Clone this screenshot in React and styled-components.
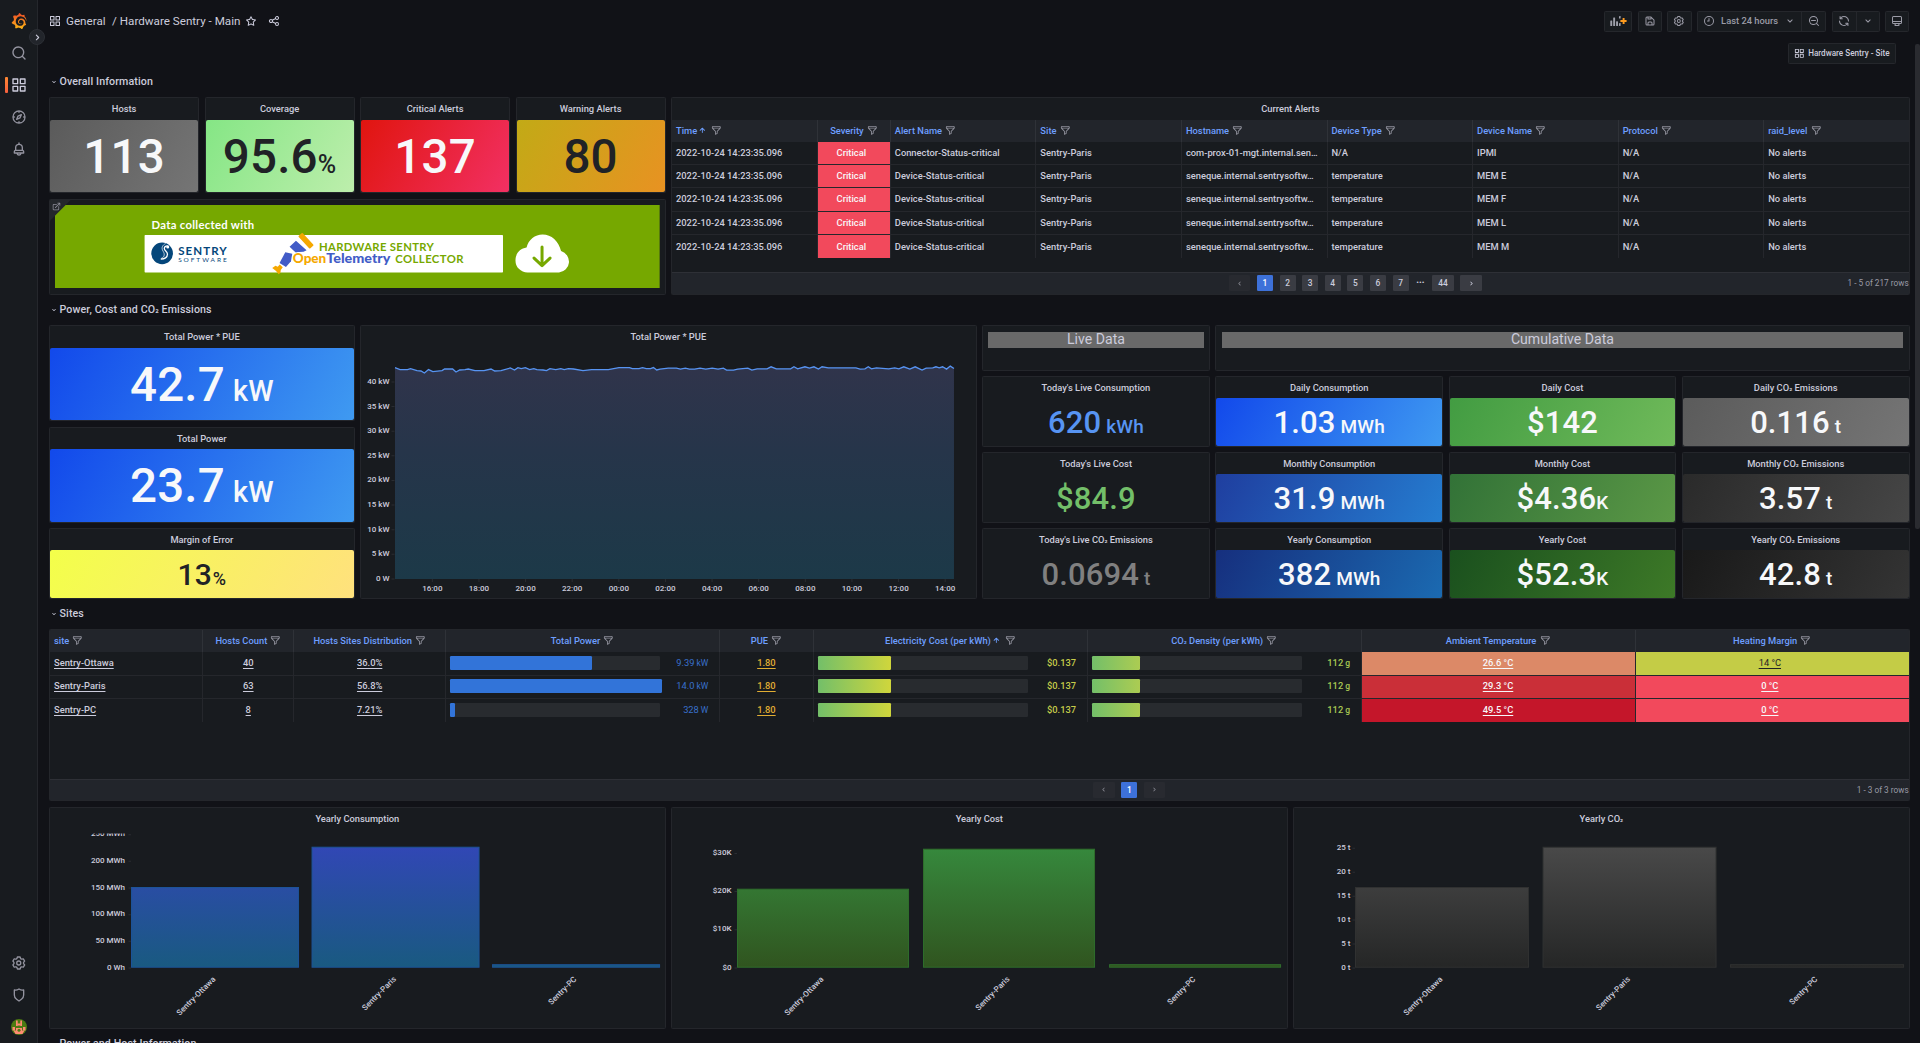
import React from "react";
import styled, { createGlobalStyle, css } from "styled-components";
import { SiGrafana } from "react-icons/si";

const GlobalStyle = createGlobalStyle`
  html, body { margin: 0; padding: 0; background: #111217; overflow: hidden; }
  * { box-sizing: border-box; }
  body {
    font-family: Roboto, "Liberation Sans", sans-serif;
    font-size: 9.333px;
    line-height: 1.5;
    color: #ccccdc;
  }
  svg { display: block; flex: none; }
`;

/* ---------- icons ---------- */

const paths = {
  apps: "M10,13H3a1,1,0,0,0-1,1v7a1,1,0,0,0,1,1h7a1,1,0,0,0,1-1V14A1,1,0,0,0,10,13ZM9,20H4V15H9ZM21,2H14a1,1,0,0,0-1,1v7a1,1,0,0,0,1,1h7a1,1,0,0,0,1-1V3A1,1,0,0,0,21,2ZM20,9H15V4h5Zm1,4H14a1,1,0,0,0-1,1v7a1,1,0,0,0,1,1h7a1,1,0,0,0,1-1V14A1,1,0,0,0,21,13Zm-1,7H15V15h5ZM10,2H3A1,1,0,0,0,2,3v7a1,1,0,0,0,1,1h7a1,1,0,0,0,1-1V3A1,1,0,0,0,10,2ZM9,9H4V4H9Z",
  search: "M21.71,20.29,18,16.61A9,9,0,1,0,16.61,18l3.68,3.68a1,1,0,0,0,1.42,0A1,1,0,0,0,21.71,20.29ZM11,18a7,7,0,1,1,7-7A7,7,0,0,1,11,18Z",
  zoomOut: "M21.71,20.29,18,16.61A9,9,0,1,0,16.61,18l3.68,3.68a1,1,0,0,0,1.42,0A1,1,0,0,0,21.71,20.29ZM11,18a7,7,0,1,1,7-7A7,7,0,0,1,11,18Zm4-8H7a1,1,0,0,0,0,2h8a1,1,0,0,0,0-2Z",
  compass: "M12,2A10,10,0,1,0,22,12,10,10,0,0,0,12,2Zm1,17.93V19a1,1,0,0,0-2,0v.93A8,8,0,0,1,4.07,13H5a1,1,0,0,0,0-2H4.07A8,8,0,0,1,11,4.07V5a1,1,0,0,0,2,0V4.07A8,8,0,0,1,19.93,11H19a1,1,0,0,0,0,2h.93A8,8,0,0,1,13,19.93ZM15.14,7.55l-5,2.12a1,1,0,0,0-.52.52l-2.12,5a1,1,0,0,0,.21,1.1,1,1,0,0,0,.7.29.93.93,0,0,0,.4-.08l5-2.12a1,1,0,0,0,.52-.52l2.12-5a1,1,0,0,0-1.31-1.31Zm-2.49,5.1-2.28,1,1-2.28,2.28-1Z",
  bell: "M18,13.18V10a6,6,0,0,0-5-5.91V3a1,1,0,0,0-2,0V4.09A6,6,0,0,0,6,10v3.18A3,3,0,0,0,4,16v2a1,1,0,0,0,1,1H8.14a4,4,0,0,0,7.72,0H19a1,1,0,0,0,1-1V16A3,3,0,0,0,18,13.18ZM8,10a4,4,0,0,1,8,0v3H8Zm4,10a2,2,0,0,1-1.72-1h3.44A2,2,0,0,1,12,20Zm6-3H6V16a1,1,0,0,1,1-1H17a1,1,0,0,1,1,1Z",
  cog: "M19.9,12.66a1,1,0,0,1,0-1.32L21.18,9.9a1,1,0,0,0,.12-1.17l-2-3.46a1,1,0,0,0-1.07-.48l-1.88.38a1,1,0,0,1-1.15-.66l-.61-1.83A1,1,0,0,0,13.64,2h-4a1,1,0,0,0-1,.68L8.08,4.51a1,1,0,0,1-1.15.66L5,4.79A1,1,0,0,0,4,5.27L2,8.73A1,1,0,0,0,2.1,9.9l1.27,1.44a1,1,0,0,1,0,1.32L2.1,14.1A1,1,0,0,0,2,15.27l2,3.46a1,1,0,0,0,1.07.48l1.88-.38a1,1,0,0,1,1.15.66l.61,1.83a1,1,0,0,0,1,.68h4a1,1,0,0,0,.95-.68l.61-1.83a1,1,0,0,1,1.15-.66l1.88.38a1,1,0,0,0,1.07-.48l2-3.46a1,1,0,0,0-.12-1.17ZM18.41,14l.8.9-1.28,2.22-1.18-.24a3,3,0,0,0-3.45,2L12.92,20H10.36L10,18.86a3,3,0,0,0-3.45-2l-1.18.24L4.07,14.89l.8-.9a3,3,0,0,0,0-4l-.8-.9L5.35,6.89l1.18.24a3,3,0,0,0,3.45-2L10.36,4h2.56l.38,1.14a3,3,0,0,0,3.45,2l1.18-.24,1.28,2.22-.8.9A3,3,0,0,0,18.41,14ZM11.64,8a4,4,0,1,0,4,4A4,4,0,0,0,11.64,8Zm0,6a2,2,0,1,1,2-2A2,2,0,0,1,11.64,14Z",
  star: "M22,9.67A1,1,0,0,0,21.14,9l-5.69-.83L12.9,3a1,1,0,0,0-1.8,0L8.55,8.16,2.86,9a1,1,0,0,0-.81.68,1,1,0,0,0,.25,1l4.13,4-1,5.68A1,1,0,0,0,6.9,21.44L12,18.77l5.1,2.67a.93.93,0,0,0,.46.12,1,1,0,0,0,.59-.19,1,1,0,0,0,.4-1l-1-5.68,4.13-4A1,1,0,0,0,22,9.67Zm-6.15,4a1,1,0,0,0-.29.88l.72,4.2-3.76-2a1.06,1.06,0,0,0-.94,0l-3.76,2,.72-4.2a1,1,0,0,0-.29-.88l-3-3,4.21-.61a1,1,0,0,0,.76-.55L12,5.7l1.88,3.82a1,1,0,0,0,.76.55l4.21.61Z",
  share: "M18,14a4,4,0,0,0-3.08,1.48l-5.1-2.35a3.64,3.64,0,0,0,0-2.26l5.1-2.35A4,4,0,1,0,14,6a4.17,4.17,0,0,0,.07.71L8.79,9.14a4,4,0,1,0,0,5.72l5.28,2.43A4.17,4.17,0,0,0,14,18a4,4,0,1,0,4-4ZM18,4a2,2,0,1,1-2,2A2,2,0,0,1,18,4ZM6,14a2,2,0,1,1,2-2A2,2,0,0,1,6,14Zm12,6a2,2,0,1,1,2-2A2,2,0,0,1,18,20Z",
  down: "M17,9.17a1,1,0,0,0-1.41,0L12,12.71,8.46,9.17a1,1,0,0,0-1.41,0,1,1,0,0,0,0,1.42l4.24,4.24a1,1,0,0,0,1.42,0L17,10.59A1,1,0,0,0,17,9.17Z",
  right: "M14.83,11.29,10.59,7.05a1,1,0,0,0-1.42,0,1,1,0,0,0,0,1.41L12.71,12,9.17,15.54a1,1,0,0,0,0,1.41,1,1,0,0,0,.71.29,1,1,0,0,0,.71-.29l4.24-4.24A1,1,0,0,0,14.83,11.29Z",
  left: "M11.29,12l3.54-3.54a1,1,0,0,0,0-1.41,1,1,0,0,0-1.42,0L9.17,11.29a1,1,0,0,0,0,1.42L13.41,17a1,1,0,0,0,.71.29,1,1,0,0,0,.71-.29,1,1,0,0,0,0-1.41Z",
  clock: "M12,2A10,10,0,1,0,22,12,10,10,0,0,0,12,2Zm0,18a8,8,0,1,1,8-8A8,8,0,0,1,12,20ZM12,6a1,1,0,0,0-1,1v4H9a1,1,0,0,0,0,2h3a1,1,0,0,0,1-1V7A1,1,0,0,0,12,6Z",
  sync: "M19.91,15.51H15.38a1,1,0,0,0,0,2h2.4A8,8,0,0,1,4,12a1,1,0,0,0-2,0,10,10,0,0,0,16.88,7.23V21a1,1,0,0,0,2,0V16.5A1,1,0,0,0,19.91,15.51ZM12,2A10,10,0,0,0,5.12,4.77V3a1,1,0,0,0-2,0V7.5a1,1,0,0,0,1,1h4.5a1,1,0,0,0,0-2H6.22A8,8,0,0,1,20,12a1,1,0,0,0,2,0A10,10,0,0,0,12,2Z",
  save: "M20.71,9.29l-6-6a1,1,0,0,0-.32-.21A1.09,1.09,0,0,0,14,3H6A3,3,0,0,0,3,6V18a3,3,0,0,0,3,3H18a3,3,0,0,0,3-3V10A1,1,0,0,0,20.71,9.29ZM9,5h4V7H9Zm6,14H9V16a1,1,0,0,1,1-1h4a1,1,0,0,1,1,1Zm4-1a1,1,0,0,1-1,1H17V16a3,3,0,0,0-3-3H10a3,3,0,0,0-3,3v3H6a1,1,0,0,1-1-1V6A1,1,0,0,1,6,5H7V8A1,1,0,0,0,8,9h6a1,1,0,0,0,1-1V6.41l4,4Z",
  monitor: "M19,2H5A3,3,0,0,0,2,5V15a3,3,0,0,0,3,3H7.64l-.58,1a2,2,0,0,0,0,2,2,2,0,0,0,1.75,1h6.46A2,2,0,0,0,17,21a2,2,0,0,0,0-2l-.59-1H19a3,3,0,0,0,3-3V5A3,3,0,0,0,19,2ZM8.77,20,10,18H14l1.2,2ZM20,15a1,1,0,0,1-1,1H5a1,1,0,0,1-1-1V14H20Zm0-3H4V5A1,1,0,0,1,5,4H19a1,1,0,0,1,1,1Z",
  filter: "M19,2H5A3,3,0,0,0,2,5V6.17a3,3,0,0,0,.25,1.2l0,.06a2.81,2.81,0,0,0,.59.86L9,14.41V21a1,1,0,0,0,.47.85A1,1,0,0,0,10,22a1,1,0,0,0,.45-.11l4-2A1,1,0,0,0,15,19V14.41l6.12-6.12a2.81,2.81,0,0,0,.59-.86l0-.06A3,3,0,0,0,22,6.17V5A3,3,0,0,0,19,2ZM13.29,13.29A1,1,0,0,0,13,14v4.38l-2,1V14a1,1,0,0,0-.29-.71L5.41,8H18.59ZM20,6H4V5A1,1,0,0,1,5,4H19a1,1,0,0,1,1,1Z",
  arrowUp: "M17.71,11.29l-5-5a1,1,0,0,0-.33-.21,1,1,0,0,0-.76,0,1,1,0,0,0-.33.21l-5,5a1,1,0,0,0,1.42,1.42L11,9.41V17a1,1,0,0,0,2,0V9.41l3.29,3.3a1,1,0,0,0,1.42,0A1,1,0,0,0,17.71,11.29Z",
  shield: "M19.63,3.65a1,1,0,0,0-.84-.2,8,8,0,0,1-6.22-1.27,1,1,0,0,0-1.14,0A8,8,0,0,1,5.21,3.45a1,1,0,0,0-.84.2A1,1,0,0,0,4,4.43v7.45a9,9,0,0,0,3.77,7.33l3.65,2.6a1,1,0,0,0,1.16,0l3.65-2.6A9,9,0,0,0,20,11.88V4.43A1,1,0,0,0,19.63,3.65ZM18,11.88a7,7,0,0,1-2.93,5.7L12,19.77,8.93,17.58A7,7,0,0,1,6,11.88V5.58a10,10,0,0,0,6-1.39,10,10,0,0,0,6,1.39Z",
  external: "M18,10.82a1,1,0,0,0-1,1V19a1,1,0,0,1-1,1H5a1,1,0,0,1-1-1V8A1,1,0,0,1,5,7h7.18a1,1,0,0,0,0-2H5A3,3,0,0,0,2,8V19a3,3,0,0,0,3,3H16a3,3,0,0,0,3-3V11.82A1,1,0,0,0,18,10.82Zm3.92-8.2a1,1,0,0,0-.54-.54A1,1,0,0,0,21,2H15a1,1,0,0,0,0,2h3.59L8.29,14.29a1,1,0,0,0,0,1.42,1,1,0,0,0,1.42,0L20,5.41V9a1,1,0,0,0,2,0V3A1,1,0,0,0,21.92,2.62Z",
};

const Icon = ({ name, size = 12, color = "currentColor" }) => (
  <svg width={size} height={size} viewBox="0 0 24 24" fill={color} aria-hidden="true">
    <path d={paths[name]} />
  </svg>
);

const AddPanelIcon = () => (
  <svg width="17" height="12" viewBox="0 0 17 12" aria-hidden="true">
    <g fill="#9fa0ab">
      <rect x="0.3" y="5.4" width="1.9" height="5.6" rx="0.5" />
      <rect x="3.2" y="2.4" width="1.9" height="8.6" rx="0.5" />
      <rect x="6.1" y="6.2" width="1.9" height="4.8" rx="0.5" />
      <rect x="9" y="1" width="1.6" height="2.6" rx="0.4" />
      <rect x="9" y="8" width="1.6" height="3" rx="0.4" />
    </g>
    <path d="M13.6 3v6M10.4 6h6.2" stroke="#ff9c1f" strokeWidth="1.9" />
  </svg>
);

const Avatar = () => (
  <svg width="16" height="16" viewBox="0 0 16 16" aria-hidden="true">
    <clipPath id="avatarClip"><circle cx="8" cy="8" r="8" /></clipPath>
    <g clipPath="url(#avatarClip)">
      <rect width="16" height="16" fill="#4b7a12" />
      <g fill="#ff8a72">
        <rect x="5" y="1.5" width="1.7" height="5.5" />
        <rect x="9.3" y="1.5" width="1.7" height="5.5" />
        <rect x="6.3" y="4.5" width="3.4" height="2" />
        <rect x="1.500" y="8" width="2.500" height="3.5" />
        <rect x="12" y="8" width="2.500" height="3.5" />
        <path d="M2.500 11.500h2.500v-2.500h6v2.500h2.500l-2 3.500h-7z" />
      </g>
      <circle cx="8" cy="11.300" r="1.500" fill="#4b7a12" />
    </g>
  </svg>
);

/* ---------- text helpers ---------- */

const LowTwo = styled.span`
  font-size: 0.88em;
  line-height: 0;
  vertical-align: 0.17em;
`;

/* sets the subscript two of CO₂ smaller, with its foot on the baseline */
const Label = ({ children }) => {
  const parts = children.split("₂");
  return (
    <span>
      {parts[0]}
      {parts.length > 1 && <LowTwo>₂</LowTwo>}
      {parts[1]}
    </span>
  );
};

/* ---------- page frame ---------- */

const Page = styled.div`
  display: flex;
  width: 100vw;
  height: 1043px;
  overflow: hidden;
  background: #111217;
`;

const Sidebar = styled.nav`
  position: relative;
  flex: none;
  width: 38px;
  padding-top: 5px;
  display: flex;
  flex-direction: column;
  background: #181b1f;
  border-right: 1px solid #25272c;
`;

const NavItem = styled.div`
  position: relative;
  height: 32px;
  display: flex;
  align-items: center;
  justify-content: center;
  padding-left: 1px;
  color: ${(p) => (p.$active ? "#ccccdc" : "#93939f")};
  ${(p) =>
    p.$active &&
    css`
      &::before {
        content: "";
        position: absolute;
        left: 5px;
        top: 8px;
        width: 3px;
        height: 16px;
        border-radius: 1px;
        background: linear-gradient(#ff8833, #f55f3e);
      }
    `}
`;

const Spacer = styled.div`
  flex: 1;
`;

const SidebarToggle = styled.div`
  position: absolute;
  left: 29px;
  top: 29px;
  width: 16px;
  height: 16px;
  display: flex;
  align-items: center;
  justify-content: center;
  border-radius: 50%;
  background: #22252b;
  border: 1px solid #2c2f35;
  color: #ccccdc;
  z-index: 2;
`;

const Main = styled.main`
  position: relative;
  flex: 1;
  min-width: 0;
  display: flex;
  flex-direction: column;
`;

const Toolbar = styled.header`
  flex: none;
  height: 42.667px;
  padding: 0 11px 0 11px;
  display: flex;
  align-items: center;
  gap: 5.333px;
`;

const Crumbs = styled.div`
  flex: 1;
  display: flex;
  align-items: center;
  font-size: 11.65px;
`;

const CrumbText = styled.span`
  margin-left: ${(p) => p.$left}px;
`;

const CrumbIcon = styled.span`
  margin-left: ${(p) => p.$left}px;
`;

const ButtonGroup = styled.div`
  display: flex;
  height: 21.333px;
  border: 1px solid #25272c;
  border-radius: 1.333px;
  background: #181b1f;
  color: #9b9ba7;
`;

const ToolButton = styled.div`
  display: flex;
  align-items: center;
  justify-content: center;
  gap: ${(p) => p.$gap || 0}px;
  width: ${(p) => p.$width}px;
  font-weight: 500;
  & + & {
    border-left: 1px solid #25272c;
  }
`;

const SubMenu = styled.div`
  flex: none;
  display: flex;
  justify-content: flex-end;
  height: 29.333px;
  padding-right: 24px;
`;

const DashLink = styled.a`
  display: flex;
  align-items: center;
  justify-content: center;
  gap: 3px;
  width: 108px;
  height: 21.333px;
  border: 1px solid #25272c;
  border-radius: 1.333px;
  background: #181b1f;
  color: #ccccdc;
  font-size: 8.15px;
  font-weight: 500;
  white-space: nowrap;
`;

const ScrollThumb = styled.div`
  position: absolute;
  right: 0;
  top: 44px;
  width: 5px;
  height: 485px;
  border-radius: 2px;
  background: #2a2b30;
`;

const Grid = styled.div`
  flex: none;
  display: grid;
  grid-template-columns: repeat(24, minmax(0, 1fr));
  grid-auto-rows: 20px;
  gap: 5.333px;
  padding: 0 10.333px 0 11px;
`;

const place = css`
  grid-column: ${(p) => p.$x + 1} / span ${(p) => p.$w};
  grid-row: ${(p) => p.$y + 1} / span ${(p) => p.$h};
`;

const RowTitle = styled.h2`
  ${place}
  margin: 0;
  padding-left: 1px;
  display: flex;
  align-items: center;
  gap: 1.5px;
  font-size: 10.667px;
  font-weight: 500;
  letter-spacing: 0.01em;
  color: #ccccdc;
`;

const PanelBox = styled.section`
  ${place}
  position: relative;
  display: flex;
  flex-direction: column;
  min-width: 0;
  min-height: 0;
  border: 1px solid #24262b;
  border-radius: 1.333px;
  background: #181b1f;
  overflow: hidden;
`;

const PanelTitle = styled.h3`
  flex: none;
  margin: 0;
  height: 21.333px;
  line-height: 22px;
  text-align: center;
  font-size: 9.333px;
  font-weight: 500;
`;

const Panel = ({ at, title, children }) => (
  <PanelBox $x={at[0]} $y={at[1]} $w={at[2]} $h={at[3]}>
    {title && <PanelTitle><Label>{title}</Label></PanelTitle>}
    {children}
  </PanelBox>
);

const Row = ({ y, children }) => (
  <RowTitle $x={0} $y={y} $w={24} $h={1}>
    <Icon name="down" size={8} />
    <Label>{children}</Label>
  </RowTitle>
);

/* ---------- stat panels ---------- */

const StatBody = styled.div`
  flex: 1;
  display: flex;
  align-items: baseline;
  justify-content: center;
  align-content: center;
  flex-wrap: wrap;
  padding-top: 0.05em;
  border-radius: 2px;
  background: ${(p) => p.$bg || "transparent"};
  color: ${(p) => p.$color || "#f7f8fa"};
  font-size: ${(p) => p.$size}px;
  font-weight: ${(p) => p.$weight || 500};
  letter-spacing: 0.004em;
  line-height: 1.1;
`;

const StatUnit = styled.span`
  font-size: ${(p) => p.$size}px;
  margin-left: ${(p) => p.$gap}px;
`;

const Stat = ({ at, title, value, unit, gap = 0, size = 31, unitSize, from, to, color, weight }) => (
  <Panel at={at} title={title}>
    <StatBody $size={size} $color={color} $weight={weight} $bg={from && `linear-gradient(120deg, ${from}, ${to})`}>
      <span>{value}</span>
      {unit && <StatUnit $size={unitSize} $gap={gap}>{unit}</StatUnit>}
    </StatBody>
  </Panel>
);

const dark = "#202226";

const stats = [
  { at: [0, 1, 2, 4], title: "Hosts", value: "113", size: 47.5, from: "#5b5b5b", to: "#757575" },
  { at: [2, 1, 2, 4], title: "Coverage", value: "95.6", unit: "%", size: 47.5, unitSize: 25, from: "#85e685", to: "#bdeeac", color: dark, weight: 500 },
  { at: [4, 1, 2, 4], title: "Critical Alerts", value: "137", size: 47.5, from: "#e0150f", to: "#f23063" },
  { at: [6, 1, 2, 4], title: "Warning Alerts", value: "80", size: 47.5, from: "#c2aa16", to: "#e89222", color: dark, weight: 500 },
  { at: [0, 10, 4, 4], title: "Total Power * PUE", value: "42.7", unit: "kW", gap: 8, size: 47.5, unitSize: 28.8, from: "#1249eb", to: "#3f9af1" },
  { at: [0, 14, 4, 4], title: "Total Power", value: "23.7", unit: "kW", gap: 8, size: 47.5, unitSize: 28.8, from: "#1249eb", to: "#3f9af1" },
  { at: [0, 18, 4, 3], title: "Margin of Error", value: "13", unit: "%", gap: 1, size: 30, unitSize: 18, from: "#f3ff4a", to: "#ffe17d", color: dark, weight: 500 },
  { at: [12, 12, 3, 3], title: "Today's Live Consumption", value: "620", unit: "kWh", gap: 5, unitSize: 19, color: "#5794f2" },
  { at: [12, 15, 3, 3], title: "Today's Live Cost", value: "$84.9", color: "#73bf69" },
  { at: [12, 18, 3, 3], title: "Today's Live CO₂ Emissions", value: "0.0694", unit: "t", gap: 5, unitSize: 19, color: "#808080" },
  { at: [15, 12, 3, 3], title: "Daily Consumption", value: "1.03", unit: "MWh", gap: 5, unitSize: 19, from: "#1249eb", to: "#3f9af1" },
  { at: [18, 12, 3, 3], title: "Daily Cost", value: "$142", from: "#429c42", to: "#70ba5a" },
  { at: [21, 12, 3, 3], title: "Daily CO₂ Emissions", value: "0.116", unit: "t", gap: 5, unitSize: 19, from: "#5b5b5b", to: "#757575" },
  { at: [15, 15, 3, 3], title: "Monthly Consumption", value: "31.9", unit: "MWh", gap: 5, unitSize: 19, from: "#1f3e9f", to: "#257dd0" },
  { at: [18, 15, 3, 3], title: "Monthly Cost", value: "$4.36", unit: "K", unitSize: 19, from: "#327237", to: "#5b9846" },
  { at: [21, 15, 3, 3], title: "Monthly CO₂ Emissions", value: "3.57", unit: "t", gap: 5, unitSize: 19, from: "#2a2a2a", to: "#464646" },
  { at: [15, 18, 3, 3], title: "Yearly Consumption", value: "382", unit: "MWh", gap: 5, unitSize: 19, from: "#162f7e", to: "#1b6ab1" },
  { at: [18, 18, 3, 3], title: "Yearly Cost", value: "$52.3", unit: "K", unitSize: 19, from: "#1a501e", to: "#3d7927" },
  { at: [21, 18, 3, 3], title: "Yearly CO₂ Emissions", value: "42.8", unit: "t", gap: 5, unitSize: 19, from: "#191919", to: "#343434" },
];

/* ---------- text panels ---------- */

const TextBody = styled.div`
  padding: 5.333px;
`;

const Ribbon = styled.div`
  height: 16px;
  line-height: 15px;
  text-align: center;
  font-size: 14.1px;
  background: #696969;
  color: #ccccdc;
`;

/* ---------- banner ---------- */

const BannerBody = styled.div`
  flex: 1;
  padding: 5.333px 5px 6px 5px;
`;

const Corner = styled.div`
  position: absolute;
  left: 0;
  top: 0;
  width: 21px;
  height: 21px;
  padding: 2px 0 0 2px;
  background: #24272c;
  clip-path: polygon(0 0, 100% 0, 0 100%);
  color: #8e8e99;
`;

const Banner = () => (
  <svg width="100%" height="100%" viewBox="0 0 604 83" preserveAspectRatio="none" fontFamily="Lato, sans-serif" fontWeight="700">
    <rect width="604" height="83" fill="#76a800" />
    <text x="96.500" y="24" fontSize="11.300" fill="#fff" textLength="102.500">Data collected with</text>
    <rect x="89.500" y="30" width="358" height="37.500" rx="0.700" fill="#fff" />
    <circle cx="107" cy="48.300" r="10.800" fill="#04467a" />
    <path d="M113.500 41.300c-2.300-1-4.500.2-4.300 2.400.2 2 3 2.600 3.100 5.200.1 3.500-2.900 5.300-6.600 5.200" fill="none" stroke="#fff" strokeWidth="1.300" />
    <path d="M110.500 38.500c-3 1.500-4.200 4-3.200 6.300.8 2 2 3 1.800 5.200-.2 1.700-1.300 2.800-3.400 3.600" fill="none" stroke="#fff" strokeWidth="0.700" />
    <circle cx="112.600" cy="42" r="1.500" fill="#fff" />
    <text x="123" y="49.700" fontSize="11.500" fill="#04467a" textLength="48.500">SENTRY</text>
    <text x="123" y="56.800" fontSize="6.500" fontWeight="400" fill="#04467a" textLength="48.500">SOFTWARE</text>
    <g transform="translate(250.700 35.700) rotate(47)" fill="#f5a800">
      <rect x="-8.500" y="-2.800" width="17" height="5.600" rx="0.900" />
    </g>
    <g fill="#425cc7">
      <path d="M234.300 41.700l6.400-6 10.600 9.600-3 1.400-4.300.3-2.300 1.700z" />
      <path d="M230 47.300l7 1.400-1.300 7.500-5 5.800-6.400-4z" />
    </g>
    <path d="M217 63l3.200-2.200 2.300 1 2-2.300 3 2.800-2 2.700-.3 2.700-1.800 1.600-2.600-3.300z" fill="#f5a800" />
    <text x="263.700" y="46" fontSize="11.300" fill="#76a800" textLength="114.700">HARDWARE SENTRY</text>
    <text x="237.500" y="58.300" fontSize="13.300" fontWeight="900" fill="#f5a800" stroke="#fff" strokeWidth="2" paintOrder="stroke" textLength="33.500" lengthAdjust="spacingAndGlyphs">Open</text>
    <text x="271" y="58.300" fontSize="13" fill="#425cc7" fontWeight="900" textLength="64" lengthAdjust="spacingAndGlyphs">Telemetry</text>
    <text x="340" y="58.300" fontSize="11.300" fill="#76a800" textLength="68">COLLECTOR</text>
    <path d="M472 67.500a12 12 0 0 1-12-12.500c0-6.500 4.500-11.500 11-12.500 2-8 8.500-13 16-13 9 0 16 6.500 18.500 16.500a11 11 0 0 1-2 21.500z" fill="#fff" />
    <path d="M486.500 42v18M478.500 53l8 7.500 8-7.500" fill="none" stroke="#76a800" strokeWidth="3" strokeLinecap="round" strokeLinejoin="round" />
  </svg>
);

/* ---------- tables ---------- */

const line = "#25272c";

const Table = styled.div`
  flex: 1;
  display: flex;
  flex-direction: column;
`;

const TableRow = styled.div`
  flex: none;
  display: grid;
  grid-template-columns: ${(p) => p.$cols};
  height: ${(p) => (p.$head ? 22 : 23.333)}px;
  background: ${(p) => (p.$head ? "#22252b" : "transparent")};
`;

const Cell = styled.div`
  display: flex;
  align-items: center;
  justify-content: ${(p) => (p.$center ? "center" : "flex-start")};
  min-width: 0;
  padding: 0 ${(p) => p.$right || 4}px ${(p) => (p.$low ? 0 : 1)}px 4px;
  border-right: 1px solid ${line};
  border-bottom: ${(p) => (p.$last ? "none" : `1px solid ${line}`)};
  background: ${(p) => p.$bg || "transparent"};
  color: ${(p) => p.$color || "inherit"};
  font-weight: ${(p) => p.$weight || 500};
  white-space: nowrap;
  text-decoration: ${(p) => (p.$link ? "underline" : "none")};
  text-underline-offset: 1.5px;
  &:last-child {
    border-right: none;
  }
`;

const HeadCell = styled(Cell)`
  border-bottom: none;
  border-right-color: #2f3238;
  color: #6e9fff;
`;

const FilterMark = styled.span`
  margin-left: 3.2px;
  color: #8e8f9a;
`;

const Head = ({ label, sorted, center, low }) => (
  <HeadCell $center={center} $low={low}>
    <Label>{label}</Label>
    {sorted && <Icon name="arrowUp" size={10.67} />}
    <FilterMark><Icon name="filter" size={10.67} /></FilterMark>
  </HeadCell>
);

const Footer = styled.div`
  position: relative;
  display: flex;
  align-items: center;
  justify-content: center;
  gap: 6.6px;
  height: 21.667px;
  padding-left: ${(p) => p.$shift}px;
  border-top: 1px solid #2e3036;
  background: #22252b;
`;

const PageButton = styled.div`
  display: flex;
  align-items: center;
  justify-content: center;
  width: ${(p) => p.$width || 16}px;
  height: 16px;
  border-radius: 1.333px;
  font-size: 8.4px;
  font-weight: 500;
  color: ${(p) => (p.$kind === "off" ? "#85868f" : p.$kind === "on" ? "#fff" : "#ccccdc")};
  background: ${(p) => (p.$kind === "off" ? "#282a30" : p.$kind === "on" ? "#3d71d9" : "#3a3c43")};
`;

const Dots = styled.div`
  width: 10.5px;
  text-align: center;
  font-size: 8px;
`;

const RowCount = styled.div`
  position: absolute;
  right: 0;
  top: 0;
  line-height: 21px;
  font-size: 8.25px;
  color: #9a9ba6;
`;

const alertCols = "146fr 73fr repeat(6, 145.700fr) 144.600fr";
const alertHead = ["Time", "Severity", "Alert Name", "Site", "Hostname", "Device Type", "Device Name", "Protocol", "raid_level"];
const alerts = [
  ["Connector-Status-critical", "com-prox-01-mgt.internal.sen…", "N/A", "IPMI"],
  ["Device-Status-critical", "seneque.internal.sentrysoftw…", "temperature", "MEM E"],
  ["Device-Status-critical", "seneque.internal.sentrysoftw…", "temperature", "MEM F"],
  ["Device-Status-critical", "seneque.internal.sentrysoftw…", "temperature", "MEM L"],
  ["Device-Status-critical", "seneque.internal.sentrysoftw…", "temperature", "MEM M"],
];

const AlertsTable = () => (
  <Table>
    <TableRow $cols={alertCols} $head>
      {alertHead.map((h, i) => <Head key={h} label={h} sorted={i === 0} center={i === 1} low />)}
    </TableRow>
    {alerts.map(([name, host, type, device], r) => {
      const last = r === alerts.length - 1;
      return (
        <TableRow key={device} $cols={alertCols}>
          <Cell $last={last} $low>2022-10-24 14:23:35.096</Cell>
          <Cell $last={last} $low $center $right={9} $bg="#f2495c" $color="#f7f8fa">Critical</Cell>
          <Cell $last={last} $low>{name}</Cell>
          <Cell $last={last} $low>Sentry-Paris</Cell>
          <Cell $last={last} $low>{host}</Cell>
          <Cell $last={last} $low>{type}</Cell>
          <Cell $last={last} $low>{device}</Cell>
          <Cell $last={last} $low>N/A</Cell>
          <Cell $last={last} $low>No alerts</Cell>
        </TableRow>
      );
    })}
    <Spacer />
    <Footer $shift={130}>
      <PageButton $width={21.5} $kind="off"><Icon name="left" size={9} /></PageButton>
      <PageButton $kind="on">1</PageButton>
      {[2, 3, 4, 5, 6, 7].map((n) => <PageButton key={n}>{n}</PageButton>)}
      <Dots>•••</Dots>
      <PageButton $width={21.5}>44</PageButton>
      <PageButton $width={21.5}><Icon name="right" size={9} /></PageButton>
      <RowCount>1 - 5 of 217 rows</RowCount>
    </Footer>
  </Table>
);

const siteCols = "153.200fr 91.200fr 151.600fr 274fr 94fr 273.700fr 274fr 274fr 273.200fr";

const GaugeTrack = styled.div`
  width: 210px;
  height: 14px;
  border-radius: 1.333px;
  background: #282b2f;
`;

const GaugeFill = styled.div`
  height: 14px;
  border-radius: 1.333px;
  background: ${(p) => p.$fill};
`;

const GaugeValue = styled.div`
  flex: 1;
  padding-right: 6.500px;
  text-align: right;
  font-weight: ${(p) => p.$weight};
  color: ${(p) => p.$color};
`;

const GaugeUnit = styled.span`
  margin-left: 2px;
  font-size: 8.5px;
`;

const Gauge = ({ width, fill, color, value, unit, last, weight = 500 }) => (
  <Cell $last={last}>
    <GaugeTrack>
      <GaugeFill $fill={fill} style={{ width }} />
    </GaugeTrack>
    <GaugeValue $color={color} $weight={weight}>
      {value}
      {unit && <GaugeUnit>{unit}</GaugeUnit>}
    </GaugeValue>
  </Cell>
);

const siteHead = ["site", "Hosts Count", "Hosts Sites Distribution", "Total Power", "PUE", "Electricity Cost (per kWh)", "CO₂ Density (per kWh)", "Ambient Temperature", "Heating Margin"];
const sites = [
  { name: "Sentry-Ottawa", hosts: "40", share: "36.0%", power: ["9.39", "kW", 142], temp: ["26.6 °C", "#dc8967"], margin: ["14 °C", "#c4cc46", "#202226", 400] },
  { name: "Sentry-Paris", hosts: "63", share: "56.8%", power: ["14.0", "kW", 212], temp: ["29.3 °C", "#ca2f38"], margin: ["0 °C", "#f2495c", "#f7f8fa", 500] },
  { name: "Sentry-PC", hosts: "8", share: "7.21%", power: ["328", "W", 5], temp: ["49.5 °C", "#c4162a"], margin: ["0 °C", "#f2495c", "#f7f8fa", 500] },
];

const SitesTable = () => (
  <Table>
    <TableRow $cols={siteCols} $head>
      {siteHead.map((h, i) => <Head key={h} label={h} sorted={i === 5} center={i > 0} />)}
    </TableRow>
    {sites.map((s, r) => {
      const last = r === sites.length - 1;
      return (
        <TableRow key={s.name} $cols={siteCols}>
          <Cell $last={last} $link>{s.name}</Cell>
          <Cell $last={last} $link $center>{s.hosts}</Cell>
          <Cell $last={last} $link $center>{s.share}</Cell>
          <Gauge last={last} width={s.power[2]} fill="#3274d9" color="#3871cc" value={s.power[0]} unit={s.power[1]} weight={400} />
          <Cell $last={last} $link $center $color="#e0ad33">1.80</Cell>
          <Gauge last={last} width={73.5} fill="linear-gradient(90deg, #73bf69, #d0d63c)" color="#c5cc4a" value="$0.137" />
          <Gauge last={last} width={48} fill="linear-gradient(90deg, #73bf69, #accc52)" color="#a9c853" value="112" unit="g" />
          <Cell $last={last} $link $center $bg={s.temp[1]} $color="#f7f8fa">{s.temp[0]}</Cell>
          <Cell $last={last} $link $center $right={8.5} $weight={s.margin[3]} $bg={s.margin[1]} $color={s.margin[2]}>{s.margin[0]}</Cell>
        </TableRow>
      );
    })}
    <Spacer />
    <Footer $shift={300}>
      <PageButton $width={21.5} $kind="off"><Icon name="left" size={9} /></PageButton>
      <PageButton $kind="on">1</PageButton>
      <PageButton $width={21.5} $kind="off"><Icon name="right" size={9} /></PageButton>
      <RowCount>1 - 3 of 3 rows</RowCount>
    </Footer>
  </Table>
);

/* ---------- charts ---------- */

const ChartSvg = styled.svg`
  width: 100%;
  flex: 1;
  min-height: 0;
  font-family: Roboto, sans-serif;
  font-size: 8px;
  font-weight: 500;
`;

/* pixel offsets of the power curve, from the top left of the chart */
const curve = [
  [34, 19.6], [39, 21.6], [46.500, 21.6], [49.500, 20.6], [56, 22.6], [60, 23], [63.400, 25], [67.500, 21.6], [71.800, 23.6], [81, 22.6], [83.600, 21], [91.600, 21], [95, 24], [98.700, 22],
  [104, 21.6], [107.200, 21], [114, 22.6], [123, 22.6], [130, 21], [133.700, 23], [140, 22.6], [149.300, 20], [153.500, 22], [156.900, 19.6], [160.200, 20.6], [164.400, 19.6], [168.600, 21.6],
  [172.800, 20.6], [175.800, 21.6], [182, 22], [185.500, 22.6], [188.900, 20.6], [194.700, 21.6], [199.800, 20.6], [203.200, 21.6], [207.400, 20.6], [212.500, 21], [222, 22.6], [230.500, 21.6],
  [247.300, 21.6], [257.900, 19.6], [268.400, 19.6], [271.300, 20.6], [278, 20.6], [281.500, 19.6], [285.200, 20.6], [289.500, 20.6], [292.400, 19.6], [295.700, 22], [299, 21.2], [307.200, 20.1],
  [315.300, 20.1], [319.400, 21.1], [324.300, 20.1], [328.400, 21.1], [333.700, 21.1], [339, 20.1], [344.700, 21.1], [351.200, 20.1], [357, 21.1], [362.300, 20.1], [365.500, 22.1], [372.500, 22.1],
  [376.600, 21.1], [386.800, 20.1], [390.800, 22.1], [396.100, 20.8], [406, 20.8], [410, 18.8], [415.300, 20.8], [429.600, 20.8], [432.900, 18.8], [436.600, 20.8], [443.900, 18.8], [448.400, 20.1],
  [452.900, 18.8], [457.400, 21.1], [461, 18.8], [467.200, 19.8], [494.900, 19.8], [499, 21.1], [503.900, 20.8], [507.200, 18.8], [510.400, 20.8], [515.300, 19.8], [527.600, 20.8], [533.700, 19.8],
  [537.800, 20.8], [542.700, 18.8], [548.800, 21.1], [554.100, 18.8], [561, 22.1], [565.100, 20.1], [571.700, 19.8], [574.900, 18.8], [578.200, 19.8], [581.500, 18.8], [585.500, 21.1], [589.200, 18.1], [592.900, 20.5],
];

const PowerChart = () => {
  const base = 231;
  const d = curve.map(([x, y]) => `${x},${y}`).join(" L");
  return (
    <ChartSvg viewBox="0 0 614.600 250" preserveAspectRatio="none">
      <defs>
        <linearGradient id="powerFill" x1="0" y1="0" x2="0" y2="1">
          <stop offset="0" stopColor="#30344b" />
          <stop offset="0.400" stopColor="#26354a" />
          <stop offset="1" stopColor="#1c3948" />
        </linearGradient>
      </defs>
      <path d={`M34,${base} L${d} L592.900,${base} Z`} fill="url(#powerFill)" />
      <path d={`M${d}`} fill="none" stroke="#5794f2" strokeWidth="1.300" />
      {[0, 5, 10, 15, 20, 25, 30, 35, 40].map((v) => {
        const y = base - v * 4.925;
        return (
          <g key={v}>
            <path d={`M30.500,${y}h3`} stroke="#2a2d32" />
            <text x="28.500" y={y + 2} textAnchor="end" fill="#ccccdc">{v === 0 ? "0 W" : `${v} kW`}</text>
          </g>
        );
      })}
      {["16:00", "18:00", "20:00", "22:00", "00:00", "02:00", "04:00", "06:00", "08:00", "10:00", "12:00", "14:00"].map((t, i) => (
        <g key={t}>
          <path d={`M${71.300 + i * 46.620},${base}v3`} stroke="#2a2d32" />
          <text x={71.300 + i * 46.620} y={base + 12} textAnchor="middle" fill="#ccccdc">{t}</text>
        </g>
      ))}
    </ChartSvg>
  );
};

const BarChart = ({ id, ticks, step, labelX, left, barWidth, pitch, heights, top, bottom, edge }) => {
  const base = 138.700;
  return (
    <ChartSvg viewBox="0 0 614.600 199.300" preserveAspectRatio="none">
      <defs>
        <linearGradient id={id} gradientUnits="userSpaceOnUse" x1="0" y1={base - 121} x2="0" y2={base}>
          <stop offset="0" stopColor={top} />
          <stop offset="1" stopColor={bottom} />
        </linearGradient>
        <clipPath id={`${id}Clip`}>
          <rect x="0" y="4.600" width="615" height="195" />
        </clipPath>
      </defs>
      <g clipPath={`url(#${id}Clip)`}>
        {ticks.map((t, i) => (
          <g key={t}>
            <path d={`M${left - 2.500},${base - i * step + 0.300}h2.500`} stroke="#2a2d32" />
            <text x={labelX} y={base - i * step + 2} textAnchor="end" fill="#ccccdc">{t}</text>
          </g>
        ))}
      </g>
      {heights.map((h, i) => {
        const x = left + i * pitch;
        const name = sites[i].name;
        return (
          <g key={name}>
            <rect x={x + 0.500} y={base - h + 0.500} width={barWidth - 1} height={h - 1} fill={`url(#${id})`} stroke={edge} />
            <text transform={`translate(${x + barWidth / 2 + 1} ${base + 12}) rotate(-45)`} textAnchor="end" fill="#ccccdc">{name}</text>
          </g>
        );
      })}
    </ChartSvg>
  );
};

/* ---------- page ---------- */

export default function App() {
  return (
    <Page>
      <GlobalStyle />
      <Sidebar>
        <svg width="0" height="0">
          <linearGradient id="grafanaFire" x1="0" y1="0" x2="0" y2="1">
            <stop offset="0" stopColor="#f04e28" />
            <stop offset="1" stopColor="#fcb716" />
          </linearGradient>
        </svg>
        <NavItem><SiGrafana size={16} fill="url(#grafanaFire)" /></NavItem>
        <NavItem><Icon name="search" size={16} /></NavItem>
        <NavItem $active><Icon name="apps" size={16} /></NavItem>
        <NavItem><Icon name="compass" size={16} /></NavItem>
        <NavItem><Icon name="bell" size={16} /></NavItem>
        <Spacer />
        <NavItem><Icon name="cog" size={16} /></NavItem>
        <NavItem><Icon name="shield" size={16} /></NavItem>
        <NavItem><Avatar /></NavItem>
        <SidebarToggle><Icon name="right" size={13} /></SidebarToggle>
      </Sidebar>
      <Main>
        <Toolbar>
          <Crumbs>
            <Icon name="apps" size={12} />
            <CrumbText $left={5}>General</CrumbText>
            <CrumbText $left={6.5}>/ Hardware Sentry - Main</CrumbText>
            <CrumbIcon $left={4.5}><Icon name="star" size={12} /></CrumbIcon>
            <CrumbIcon $left={11}><Icon name="share" size={12} /></CrumbIcon>
          </Crumbs>
          <ButtonGroup><ToolButton $width={26}><AddPanelIcon /></ToolButton></ButtonGroup>
          <ButtonGroup><ToolButton $width={22.3}><Icon name="save" /></ToolButton></ButtonGroup>
          <ButtonGroup><ToolButton $width={22.3}><Icon name="cog" /></ToolButton></ButtonGroup>
          <ButtonGroup>
            <ToolButton $width={103.5} $gap={6}>
              <Icon name="clock" />
              Last 24 hours
              <Icon name="down" />
            </ToolButton>
            <ToolButton $width={24}><Icon name="zoomOut" /></ToolButton>
          </ButtonGroup>
          <ButtonGroup>
            <ToolButton $width={23.5}><Icon name="sync" /></ToolButton>
            <ToolButton $width={22.5}><Icon name="down" /></ToolButton>
          </ButtonGroup>
          <ButtonGroup><ToolButton $width={22}><Icon name="monitor" /></ToolButton></ButtonGroup>
        </Toolbar>
        <SubMenu>
          <DashLink><Icon name="apps" size={10.67} />Hardware Sentry - Site</DashLink>
        </SubMenu>
        <Grid>
          <Row y={0}>Overall Information</Row>
          <Panel at={[0, 5, 8, 4]}>
            <BannerBody><Banner /></BannerBody>
            <Corner><Icon name="external" size={9} /></Corner>
          </Panel>
          <Panel at={[8, 1, 16, 8]} title="Current Alerts"><AlertsTable /></Panel>

          <Row y={9}>Power, Cost and CO₂ Emissions</Row>
          <Panel at={[4, 10, 8, 11]} title="Total Power * PUE"><PowerChart /></Panel>
          <Panel at={[12, 10, 3, 2]}><TextBody><Ribbon>Live Data</Ribbon></TextBody></Panel>
          <Panel at={[15, 10, 9, 2]}><TextBody><Ribbon>Cumulative Data</Ribbon></TextBody></Panel>
          {stats.map((s) => <Stat key={s.at.join()} {...s} />)}

          <Row y={21}>Sites</Row>
          <Panel at={[0, 22, 24, 7]}><SitesTable /></Panel>

          <Panel at={[0, 29, 8, 9]} title="Yearly Consumption">
            <BarChart id="mwh" ticks={["0 Wh", "50 MWh", "100 MWh", "150 MWh", "200 MWh", "250 MWh"]} step={26.67} labelX={75} left={81} barWidth={168} pitch={180.5} heights={[80.7, 121, 3.5]} top="#3147b5" bottom="#195a80" edge="#1d5398" />
          </Panel>
          <Panel at={[8, 29, 8, 9]} title="Yearly Cost">
            <BarChart id="usd" ticks={["$0", "$10K", "$20K", "$30K"]} step={38.2} labelX={59.5} left={65} barWidth={172} pitch={186} heights={[79, 119, 3.5]} top="#36893d" bottom="#30541f" edge="#2f6e2c" />
          </Panel>
          <Panel at={[16, 29, 8, 9]} title="Yearly CO₂">
            <BarChart id="co2" ticks={["0 t", "5 t", "10 t", "15 t", "20 t", "25 t"]} step={23.95} labelX={56.5} left={61} barWidth={174} pitch={187.5} heights={[80.7, 121, 3.5]} top="#494949" bottom="#252626" edge="#303131" />
          </Panel>

          <Row y={38}>Power and Host Information</Row>
        </Grid>
        <ScrollThumb />
      </Main>
    </Page>
  );
}
